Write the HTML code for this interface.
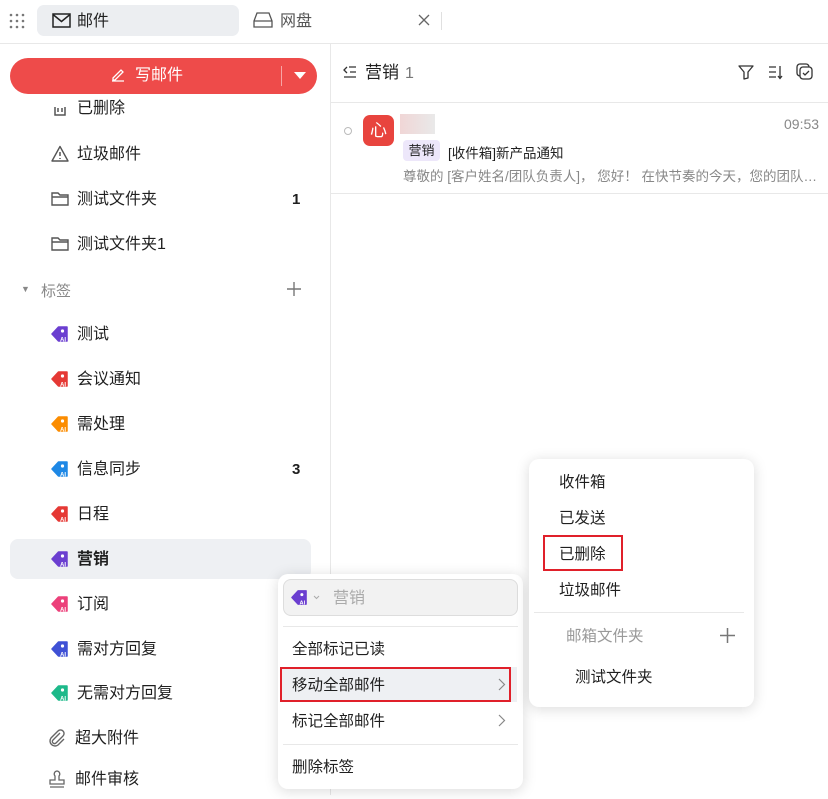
<!DOCTYPE html>
<html><head><meta charset="utf-8"><style>
*{box-sizing:border-box;margin:0;padding:0}
body{width:828px;height:795px;overflow:hidden;background:#fff;font-family:"Liberation Sans","Noto Sans CJK SC",sans-serif;color:#1f1f1f;position:relative;font-size:15px}
.abs{position:absolute}
.item{position:absolute;left:0;width:330px;height:40px;display:flex;align-items:center;font-size:16px}
.item .ic{position:absolute;left:51px;top:11px;width:18px;height:18px}
.item .t{position:absolute;left:77px;top:10px;line-height:22px}
.item .n{position:absolute;left:292px;font-weight:bold;font-size:15px;top:12px}
.menu{position:absolute;background:#fff;border-radius:10px;box-shadow:0 2px 14px rgba(0,0,0,.15)}
.mi{position:absolute;font-size:15.5px;color:#1f1f1f;line-height:20px}
</style></head><body>
<div class="abs" style="left:0;top:43px;width:828px;height:1px;background:#e8e8e8"></div>
<svg class="abs" style="left:9px;top:13px" width="16" height="16"><g fill="#777"><circle cx="2" cy="2" r="1.3"/><circle cx="8" cy="2" r="1.3"/><circle cx="14" cy="2" r="1.3"/><circle cx="2" cy="8" r="1.3"/><circle cx="8" cy="8" r="1.3"/><circle cx="14" cy="8" r="1.3"/><circle cx="2" cy="14" r="1.3"/><circle cx="8" cy="14" r="1.3"/><circle cx="14" cy="14" r="1.3"/></g></svg>
<div class="abs" style="left:37px;top:5px;width:202px;height:31px;background:#eceef1;border-radius:7px"></div>
<svg class="abs" style="left:52px;top:13px" width="19" height="15"><rect x="1" y="1" width="17" height="13" fill="none" stroke="#222" stroke-width="1.5"/><path d="M1 1.5 L9.5 8.5 L18 1.5" fill="none" stroke="#222" stroke-width="1.5"/></svg>
<div class="abs" style="left:77px;top:11px;font-size:16px;line-height:22px">邮件</div>
<svg class="abs" style="left:253px;top:12px" width="20" height="16"><path d="M4 1 H16 L19 9 V15 H1 V9 Z M1 9 H19" fill="none" stroke="#555" stroke-width="1.3"/></svg>
<div class="abs" style="left:280px;top:11px;font-size:16px;color:#555;line-height:22px">网盘</div>
<svg class="abs" style="left:418px;top:14px" width="12" height="12"><path d="M1 1 L11 11 M11 1 L1 11" stroke="#666" stroke-width="1.3"/></svg>
<div class="abs" style="left:441px;top:12px;width:1px;height:18px;background:#e0e0e0"></div>
<div class="abs" style="left:330px;top:44px;width:1px;height:751px;background:#e8e8e8"></div>
<div class="item" style="top:88px;color:#222"><svg class="ic" viewBox="0 0 18 18"><path d="M4 8 V16 H14 V8" fill="none" stroke="#555" stroke-width="1.5"/><path d="M7 9V13M11 9V13" stroke="#555" stroke-width="1.5"/></svg><span class="t">已删除</span></div>
<div class="abs" style="left:10px;top:58px;width:307px;height:36px;background:#ee4b4a;border-radius:18px"></div>
<svg class="abs" style="left:110px;top:67px" width="16" height="16"><path d="M2 14 H14 M3 11 L11 3 L13 5 L5 13 H3 Z" fill="none" stroke="#fff" stroke-width="1.3"/></svg>
<div class="abs" style="left:135px;top:65px;color:#fff;font-size:16px;line-height:22px">写邮件</div>
<div class="abs" style="left:281px;top:66px;width:1px;height:20px;background:rgba(255,255,255,.5)"></div>
<div class="abs" style="left:294px;top:72px;width:0;height:0;border-left:6px solid transparent;border-right:6px solid transparent;border-top:7px solid #fff"></div>
<div class="item" style="top:134px"><svg class="ic" viewBox="0 0 18 18"><path d="M9 1.5 L17 16 H1 Z" fill="none" stroke="#555" stroke-width="1.4" stroke-linejoin="round"/><path d="M9 7V11M9 13V14" stroke="#555" stroke-width="1.5"/></svg><span class="t">垃圾邮件</span></div>
<div class="item" style="top:179px"><svg class="ic" viewBox="0 0 18 18"><path d="M1 3 H7 L9 5 H17 V15 H1 Z M1 7 H17" fill="none" stroke="#555" stroke-width="1.4"/></svg><span class="t">测试文件夹</span><span class="n">1</span></div>
<div class="item" style="top:224px"><svg class="ic" viewBox="0 0 18 18"><path d="M1 3 H7 L9 5 H17 V15 H1 Z M1 7 H17" fill="none" stroke="#555" stroke-width="1.4"/></svg><span class="t">测试文件夹1</span></div>
<div class="item" style="top:269px;color:#888;font-size:15px"><span style="position:absolute;left:21px;top:15px;font-size:9px;color:#888">▼</span><span style="position:absolute;left:41px;top:11px">标签</span><svg style="position:absolute;left:287px;top:13px" width="14" height="14"><path d="M7 0V14M0 7H14" stroke="#777" stroke-width="1.4"/></svg></div>
<svg width="0" height="0" style="position:absolute"><defs><symbol id="tag" viewBox="0 0 18 18"><path d="M1 9 L7.5 2 H16 V16 H7.5 Z" fill="currentColor" stroke="currentColor" stroke-linejoin="round" stroke-width="1.5"/><circle cx="11.5" cy="6" r="1.6" fill="#fff"/><text x="9" y="16.5" font-size="6" fill="#fff" font-family="Liberation Sans" font-weight="bold">AI</text></symbol></defs></svg>
<div class="item" style="top:314px"><svg class="ic" style="color:#6b3fd0"><use href="#tag"/></svg><span class="t">测试</span></div>
<div class="item" style="top:359px"><svg class="ic" style="color:#e53935"><use href="#tag"/></svg><span class="t">会议通知</span></div>
<div class="item" style="top:404px"><svg class="ic" style="color:#fb8c00"><use href="#tag"/></svg><span class="t">需处理</span></div>
<div class="item" style="top:449px"><svg class="ic" style="color:#1e88e5"><use href="#tag"/></svg><span class="t">信息同步</span><span class="n">3</span></div>
<div class="item" style="top:494px"><svg class="ic" style="color:#e53935"><use href="#tag"/></svg><span class="t">日程</span></div>
<div class="abs" style="left:10px;top:539px;width:301px;height:40px;background:#eef0f3;border-radius:8px"></div>
<div class="item" style="top:539px;font-weight:bold"><svg class="ic" style="color:#6b3fd0"><use href="#tag"/></svg><span class="t">营销</span></div>
<div class="item" style="top:584px"><svg class="ic" style="color:#ec407a"><use href="#tag"/></svg><span class="t">订阅</span></div>
<div class="item" style="top:629px"><svg class="ic" style="color:#3f51d5"><use href="#tag"/></svg><span class="t">需对方回复</span></div>
<div class="item" style="top:673px"><svg class="ic" style="color:#1db98a"><use href="#tag"/></svg><span class="t">无需对方回复</span></div>
<div class="item" style="top:718px"><svg class="ic" style="left:48px" viewBox="0 0 18 18"><path d="M12 4 L5 11 a2 2 0 0 0 3 3 L15 7 a3.5 3.5 0 0 0 -5 -5 L3 9 a5 5 0 0 0 7 7 L16 10" fill="none" stroke="#666" stroke-width="1.4"/></svg><span class="t" style="left:75px">超大附件</span></div>
<div class="item" style="top:759px"><svg class="ic" style="left:48px" viewBox="0 0 18 18"><path d="M9 1 a3 3 0 0 1 2 5 V10 H16 V14 H2 V10 H7 V6 A3 3 0 0 1 9 1 Z M2 17 H16" fill="none" stroke="#666" stroke-width="1.3"/></svg><span class="t" style="left:75px">邮件审核</span></div>
<svg class="abs" style="left:343px;top:66px" width="14" height="12"><path d="M4 1 L1 4 L4 7 M6 1H13 M7 6H13 M1 11H13" fill="none" stroke="#333" stroke-width="1.3"/></svg>
<div class="abs" style="left:365px;top:62px;font-size:17px;line-height:22px">营销</div>
<div class="abs" style="left:405px;top:63px;font-size:16px;color:#777;line-height:22px">1</div>
<svg class="abs" style="left:738px;top:64px" width="16" height="16"><path d="M1 2 H15 L10 8 V14 L6 15 V8 Z" fill="none" stroke="#333" stroke-width="1.3" stroke-linejoin="round"/></svg>
<svg class="abs" style="left:768px;top:64px" width="16" height="16"><path d="M1 3H8 M1 8H8 M1 13H8 M12 2V14 M10 12 L12 14.5 L14 12" fill="none" stroke="#333" stroke-width="1.3"/></svg>
<svg class="abs" style="left:796px;top:63px" width="18" height="18"><rect x="1" y="1" width="12" height="12" rx="3" fill="none" stroke="#333" stroke-width="1.3"/><rect x="4" y="4" width="12" height="12" rx="3" fill="#fff" stroke="#333" stroke-width="1.3"/><path d="M7 10 L9 12 L13 8" fill="none" stroke="#333" stroke-width="1.3"/></svg>
<div class="abs" style="left:331px;top:102px;width:497px;height:1px;background:#e8e8e8"></div>
<div class="abs" style="left:331px;top:193px;width:497px;height:1px;background:#e8e8e8"></div>
<div class="abs" style="left:344px;top:127px;width:8px;height:8px;border:1px solid #bbb;border-radius:50%"></div>
<div class="abs" style="left:363px;top:115px;width:31px;height:31px;background:#e8443e;border-radius:7px;color:#fff;font-size:17px;text-align:center;line-height:31px">心</div>
<div class="abs" style="left:400px;top:114px;width:35px;height:20px;background:linear-gradient(90deg,#f0d6d6,#e9e9e9)"></div>
<div class="abs" style="left:784px;top:116px;color:#888;font-size:14px">09:53</div>
<div class="abs" style="left:403px;top:140px;width:37px;height:21px;background:#ede7fa;border-radius:4px;font-size:13px;text-align:center;line-height:21px">营销</div>
<div class="abs" style="left:448px;top:142px;font-size:13.5px">[收件箱]新产品通知</div>
<div class="abs" style="left:403px;top:165px;font-size:13.5px;color:#888;white-space:nowrap">尊敬的 [客户姓名/团队负责人]， 您好！ 在快节奏的今天，您的团队…</div>
<div class="menu" style="left:278px;top:574px;width:245px;height:215px"></div>
<div class="abs" style="left:283px;top:579px;width:235px;height:37px;border:1px solid #ddd;background:#f2f2f2;border-radius:8px"></div>
<svg class="abs" style="left:291px;top:589px;color:#6b3fd0" width="17" height="17"><use href="#tag"/></svg>
<svg class="abs" style="left:313px;top:595px" width="7" height="5"><path d="M1 1 L3.5 3.5 L6 1" fill="none" stroke="#aaa"/></svg>
<div class="abs" style="left:333px;top:588px;font-size:16px;color:#aaa;line-height:22px">营销</div>
<div class="abs" style="left:283px;top:626px;width:235px;height:1px;background:#e8e8e8"></div>
<div class="mi" style="left:292px;top:640px">全部标记已读</div>
<div class="abs" style="left:281px;top:667px;width:236px;height:35px;background:#eef0f3"></div>
<div class="abs" style="left:280px;top:667px;width:231px;height:35px;border:2px solid #e0202a"></div>
<div class="mi" style="left:292px;top:676px">移动全部邮件</div>
<svg class="abs" style="left:498px;top:678px" width="8" height="13"><path d="M1 1 L6.5 6.5 L1 12" fill="none" stroke="#888" stroke-width="1.2"/></svg>
<div class="mi" style="left:292px;top:712px">标记全部邮件</div>
<svg class="abs" style="left:498px;top:714px" width="8" height="13"><path d="M1 1 L6.5 6.5 L1 12" fill="none" stroke="#888" stroke-width="1.2"/></svg>
<div class="abs" style="left:283px;top:744px;width:235px;height:1px;background:#e8e8e8"></div>
<div class="mi" style="left:292px;top:758px">删除标签</div>
<div class="menu" style="left:529px;top:459px;width:225px;height:248px"></div>
<div class="mi" style="left:559px;top:473px">收件箱</div>
<div class="mi" style="left:559px;top:509px">已发送</div>
<div class="abs" style="left:543px;top:535px;width:80px;height:36px;border:2px solid #e0202a"></div>
<div class="mi" style="left:559px;top:545px">已删除</div>
<div class="mi" style="left:559px;top:581px">垃圾邮件</div>
<div class="abs" style="left:534px;top:612px;width:210px;height:1px;background:#e8e8e8"></div>
<div class="mi" style="left:566px;top:627px;color:#999">邮箱文件夹</div>
<svg class="abs" style="left:720px;top:628px" width="15" height="15"><path d="M7.5 0V15M0 7.5H15" stroke="#777" stroke-width="1.5"/></svg>
<div class="mi" style="left:575px;top:668px">测试文件夹</div>
</body></html>
